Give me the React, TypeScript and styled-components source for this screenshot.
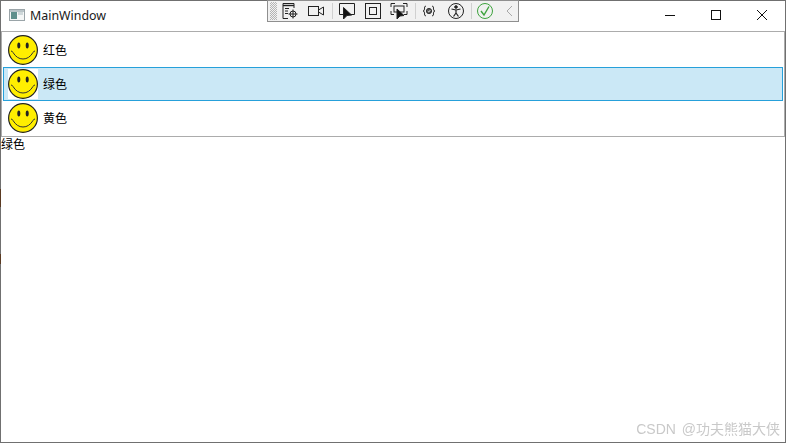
import React from "react";
import styled, { createGlobalStyle } from "styled-components";

const GlobalStyle = createGlobalStyle`
  html, body {
    margin: 0;
    padding: 0;
    background: #fff;
  }
  body {
    font-family: "Liberation Sans", "Noto Sans CJK SC", sans-serif;
  }
`;

const Window = styled.div`
  position: relative;
  width: 786px;
  height: 443px;
  box-sizing: border-box;
  border: 1px solid #707070;
  background: #fff;
  display: flex;
  flex-direction: column;
`;

const TitleBar = styled.div`
  height: 30px;
  display: flex;
  align-items: center;
  flex-shrink: 0;
`;

const AppIcon = styled.svg`
  width: 16px;
  height: 16px;
  margin-left: 8px;
  margin-right: 5px;
  margin-bottom: 2px;
`;

const Title = styled.span`
  font-family: "Noto Sans", "Open Sans", sans-serif;
  font-size: 12.4px;
  color: #1a1a1a;
  margin-bottom: 2px;
`;

const Caption = styled.div`
  margin-left: auto;
  align-self: flex-start;
  display: flex;
`;

const CaptionButton = styled.div`
  width: 46px;
  height: 28px;
  display: flex;
  align-items: center;
  justify-content: center;
`;

const List = styled.div`
  border: 1px solid #acacac;
  padding: 1px;
  height: 102px;
  flex-shrink: 0;
`;

const Row = styled.div<{ $selected?: boolean }>`
  height: 34px;
  box-sizing: border-box;
  border: 1px solid ${(p) => (p.$selected ? "#26a0da" : "transparent")};
  background: ${(p) => (p.$selected ? "#cbe8f6" : "transparent")};
  display: flex;
  align-items: center;
  padding-left: 4px;
`;

const Face = styled.div`
  width: 30px;
  height: 30px;
  background: #fff;
  flex-shrink: 0;
`;

const RowLabel = styled.span`
  margin-left: 5px;
  margin-bottom: 2px;
  font-family: "Noto Sans CJK SC", sans-serif;
  font-size: 12px;
  color: #000;
`;

const Selected = styled.div`
  font-family: "Noto Sans CJK SC", sans-serif;
  font-size: 12px;
  line-height: 14px;
  color: #000;
`;

const DebugBar = styled.div`
  position: absolute;
  left: 266px;
  top: -1px;
  width: 252px;
  height: 22px;
  box-sizing: border-box;
  background: #f1f1f1;
  border: 1px solid #8f8f8f;
  display: flex;
  align-items: center;
  overflow: hidden;
`;

const Grip = styled.div`
  width: 7px;
  height: 18px;
  margin-left: 2px;
  flex-shrink: 0;
  background: conic-gradient(#b4b4b4 25%, transparent 0 50%, #b4b4b4 0 75%, transparent 0);
  background-size: 2px 2px;
`;

const Tool = styled.svg<{ $left: number }>`
  width: 18px;
  height: 18px;
  margin-left: ${(p) => p.$left}px;
  flex-shrink: 0;
`;

const Sep = styled.div<{ $left: number }>`
  width: 1px;
  height: 16px;
  background: #d0d0d0;
  margin-left: ${(p) => p.$left}px;
  flex-shrink: 0;
`;

const EdgeMark = styled.div<{ $top: number; $height: number }>`
  position: absolute;
  left: -1px;
  top: ${(p) => p.$top}px;
  width: 1px;
  height: ${(p) => p.$height}px;
  background: #5a3a22;
`;

const Watermark = styled.div`
  position: absolute;
  right: 5px;
  bottom: 4px;
  font-family: "Liberation Sans", "Noto Sans CJK SC", sans-serif;
  font-size: 14px;
  line-height: 18px;
  word-spacing: 2px;
  color: #c9c9c9;
  filter: blur(0.3px);
`;

const Smiley = () => (
  <svg width="30" height="30" viewBox="0 0 30 30">
    <circle cx="15" cy="15" r="14.4" fill="#ffee00" stroke="#222" strokeWidth="1.2" />
    <ellipse cx="10.8" cy="10.5" rx="1.5" ry="3" fill="#222" />
    <ellipse cx="19.2" cy="10.5" rx="1.5" ry="3" fill="#222" />
    <path d="M3 16 Q4.6 16.2 5 17.5 Q9 24 15 24 Q21 24 25 17.5 Q25.4 16.2 27 16" fill="none" stroke="#333" strokeWidth="1" />
  </svg>
);

const items = ["红色", "绿色", "黄色"];

export default function App() {
  return (
    <>
      <GlobalStyle />
      <Window>
        <TitleBar>
          <AppIcon viewBox="0 0 16 16">
            <rect x="0.5" y="2.5" width="15" height="11" fill="#f4f6f6" stroke="#9aa4a8" />
            <rect x="1" y="3" width="14" height="2" fill="#b9c4c8" />
            <rect x="2" y="5" width="6" height="7" fill="#5f8f8c" />
            <rect x="9" y="5" width="5" height="3" fill="#cfd8da" />
          </AppIcon>
          <Title>MainWindow</Title>
          <Caption>
            <CaptionButton>
              <svg width="10" height="10" viewBox="0 0 10 10">
                <path d="M0 5.5H10" stroke="#111" strokeWidth="1" />
              </svg>
            </CaptionButton>
            <CaptionButton>
              <svg width="10" height="10" viewBox="0 0 10 10">
                <rect x="0.5" y="0.5" width="9" height="9" fill="none" stroke="#111" />
              </svg>
            </CaptionButton>
            <CaptionButton>
              <svg width="10" height="10" viewBox="0 0 10 10">
                <path d="M0 0L10 10M10 0L0 10" stroke="#111" strokeWidth="1" />
              </svg>
            </CaptionButton>
          </Caption>
        </TitleBar>
        <List>
          {items.map((item, i) => (
            <Row key={item} $selected={i === 1}>
              <Face>
                <Smiley />
              </Face>
              <RowLabel>{item}</RowLabel>
            </Row>
          ))}
        </List>
        <Selected>绿色</Selected>
        <DebugBar>
          <Grip />
          <Tool $left={4} viewBox="0 0 18 18" fill="none" stroke="#222">
            <path d="M2 1.5H13V6M2 1.5V16.5H7" />
            <path d="M2 3.5H13" strokeWidth="1.4" />
            <path d="M4 6.5H8M4 9H7M4 11.5H7" />
            <circle cx="12" cy="12" r="3" />
            <path d="M12 7.5V16.5M7.5 12H16.5" />
          </Tool>
          <Tool $left={8} viewBox="0 0 18 18" fill="none" stroke="#222">
            <rect x="1.5" y="4.5" width="10" height="9" />
            <path d="M11.5 8L16.5 5V13L11.5 10" />
          </Tool>
          <Sep $left={7} />
          <Tool $left={5} viewBox="0 0 18 18" fill="none" stroke="#222">
            <path d="M5 12.5H1.5V1.5H16.5V12.5H12" />
            <path d="M5.5 5.5L5.5 17L9 13.5L13.5 13Z" fill="#111" />
          </Tool>
          <Tool $left={8} viewBox="0 0 18 18" fill="none" stroke="#222">
            <rect x="1.5" y="1.5" width="15" height="15" />
            <rect x="5.5" y="5.5" width="7" height="7" />
          </Tool>
          <Tool $left={8} viewBox="0 0 18 18" fill="none" stroke="#222">
            <path d="M1 5V1.5H5M13 1.5H17V5M17 9V12.5H14M1 9V12.5H4" />
            <rect x="4" y="4" width="10" height="6" />
            <path d="M7 7L7 17L10 14L14 13.5Z" fill="#111" />
          </Tool>
          <Sep $left={7} />
          <Tool $left={4} viewBox="0 0 18 18" fill="none" stroke="#333">
            <path d="M6 4Q4 4 4.5 7Q4.5 9 3 9Q4.5 9 4.5 11Q4 14 6 14M12 4Q14 4 13.5 7Q13.5 9 15 9Q13.5 9 13.5 11Q14 14 12 14" />
            <circle cx="9" cy="9" r="2.6" fill="#555" />
            <path d="M7.8 9.2L8.8 10L10.4 8" stroke="#fff" strokeWidth="0.8" />
          </Tool>
          <Tool $left={9} viewBox="0 0 18 18" fill="none" stroke="#222">
            <circle cx="9" cy="9" r="7.5" />
            <circle cx="9" cy="5" r="1.3" fill="#222" />
            <path d="M4.5 7L9 8L13.5 7M9 8V11M9 11L6.5 14.5M9 11L11.5 14.5" strokeWidth="1.2" />
          </Tool>
          <Sep $left={6} />
          <Tool $left={4} viewBox="0 0 18 18" fill="none" stroke="#3ea33e">
            <circle cx="9" cy="9" r="7.5" />
            <path d="M5 9L8 13L13 4.5" strokeWidth="1.4" />
          </Tool>
          <Tool $left={6} viewBox="0 0 18 18" fill="none" stroke="#a8a8a8">
            <path d="M12 4L7 9L12 14" />
          </Tool>
        </DebugBar>
        <EdgeMark $top={188} $height={18} />
        <EdgeMark $top={253} $height={10} />
        <Watermark>CSDN @功夫熊猫大侠</Watermark>
      </Window>
    </>
  );
}
